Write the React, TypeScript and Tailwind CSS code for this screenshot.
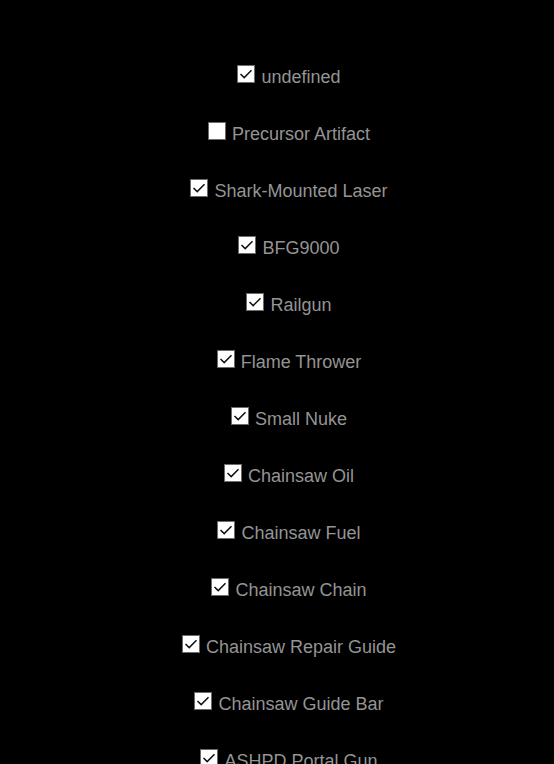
const items: { name: string; checked: boolean }[] = [
  { name: "undefined", checked: true },
  { name: "Precursor Artifact", checked: false },
  { name: "Shark-Mounted Laser", checked: true },
  { name: "BFG9000", checked: true },
  { name: "Railgun", checked: true },
  { name: "Flame Thrower", checked: true },
  { name: "Small Nuke", checked: true },
  { name: "Chainsaw Oil", checked: true },
  { name: "Chainsaw Fuel", checked: true },
  { name: "Chainsaw Chain", checked: true },
  { name: "Chainsaw Repair Guide", checked: true },
  { name: "Chainsaw Guide Bar", checked: true },
  { name: "ASHPD Portal Gun", checked: true },
];

function Box({ checked }: { checked: boolean }) {
  return (
    <span className="mb-[5px] flex h-[18px] w-[18px] shrink-0 items-center justify-center border border-[#6b6b6b] bg-white">
      {checked && (
        <svg width="16" height="16" viewBox="0 0 16 16" fill="none">
          <path d="M2.5 8 L6.2 11.6 L13.5 4.3" stroke="#111" strokeWidth="1.5" />
        </svg>
      )}
    </span>
  );
}

export default function App() {
  return (
    <div className="h-screen overflow-hidden bg-black pl-[24px] pt-[65px] font-['Liberation_Sans',Arial,sans-serif]">
      <ul className="flex flex-col items-center">
        {items.map((item) => (
          <li key={item.name} className="flex h-[57px] items-start">
            <label className="flex items-end gap-[6px]">
              <Box checked={item.checked} />
              <span className="text-[18px] leading-[21px] text-[#949494]">{item.name}</span>
            </label>
          </li>
        ))}
      </ul>
    </div>
  );
}
